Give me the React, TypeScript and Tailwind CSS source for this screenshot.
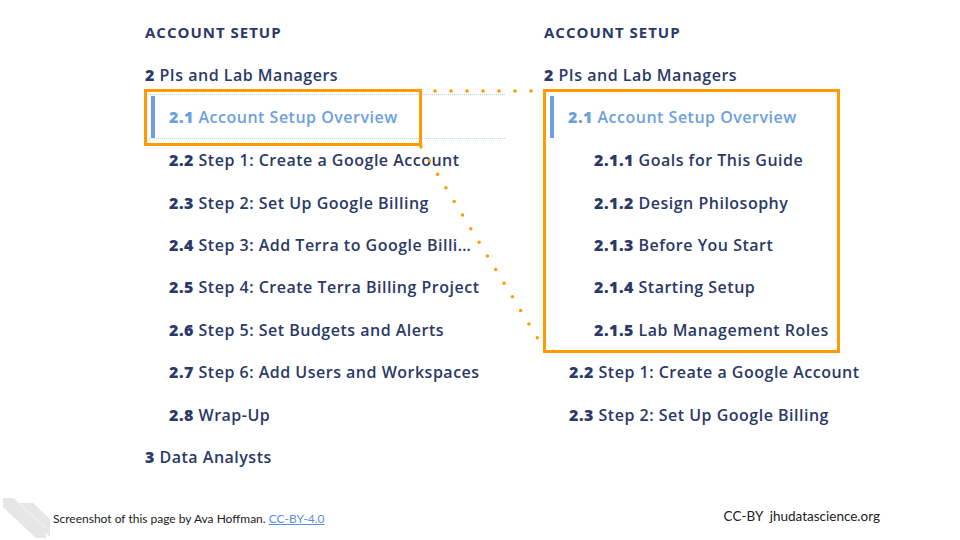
import React from 'react';

const NAVY = 'text-[#2b3967]';

const leftItems = [
  { num: '2.2', label: 'Step 1: Create a Google Account' },
  { num: '2.3', label: 'Step 2: Set Up Google Billing' },
  { num: '2.4', label: 'Step 3: Add Terra to Google Billing Account' },
  { num: '2.5', label: 'Step 4: Create Terra Billing Project' },
  { num: '2.6', label: 'Step 5: Set Budgets and Alerts' },
  { num: '2.7', label: 'Step 6: Add Users and Workspaces' },
  { num: '2.8', label: 'Wrap-Up' },
];

const subItems = [
  { num: '2.1.1', label: 'Goals for This Guide' },
  { num: '2.1.2', label: 'Design Philosophy' },
  { num: '2.1.3', label: 'Before You Start' },
  { num: '2.1.4', label: 'Starting Setup' },
  { num: '2.1.5', label: 'Lab Management Roles' },
];

function TocRow({ num, label, indent, truncate }: { num: string; label: string; indent: string; truncate?: boolean }) {
  return (
    <div className={`h-[42.4px] flex items-center ${indent}`}>
      <span className={`${truncate ? 'w-[312px] truncate' : 'whitespace-nowrap'} block`}>
        <span className="font-extrabold">{num}</span> {label}
      </span>
    </div>
  );
}

function Header() {
  return (
    <>
      <div className="h-[24px] flex items-center text-[15px] font-bold tracking-[1px]">ACCOUNT SETUP</div>
      <div className="mt-[18px] h-[26px] flex items-center">
        <span>
          <span className="font-extrabold">2</span> PIs and Lab Managers
        </span>
      </div>
    </>
  );
}

function ActiveItem({ dotted }: { dotted?: boolean }) {
  return (
    <div
      className={`mt-[6px] h-[45px] ml-[4px] flex items-center ${
        dotted ? 'border-y border-dotted border-[#bcd3ef] w-[356px]' : ''
      }`}
    >
      <div className="w-[4px] h-[42px] bg-[#6d9fe0] ml-[2px]" />
      <span className="ml-[14px] text-[#6d9fe0]">
        <span className="font-extrabold">2.1</span> Account Setup Overview
      </span>
    </div>
  );
}

function Logo() {
  return (
    <svg width="52" height="44" viewBox="0 0 52 44" className="block">
      <polygon points="3,3 14,3 46,33 46,43 36,43 3,12" fill="#e6e6e6" />
      <polygon points="16,8 33,8 50,24 50,42 45,37 45,32" fill="#e6e6e6" />
      <line x1="13" y1="3" x2="46" y2="33" stroke="#f6f6f6" strokeWidth="1" />
    </svg>
  );
}

export default function App() {
  return (
    <div
      className={`relative w-[960px] h-[540px] bg-white overflow-hidden ${NAVY} text-[16px] font-semibold tracking-[0.5px]`}
      style={{ fontFamily: '"Open Sans", "Noto Sans", sans-serif' }}
    >
      <div className="flex pt-[20px] pl-[145px]">
        {/* left column */}
        <div className="w-[399px] flex flex-col">
          <Header />
          <ActiveItem dotted />
          {leftItems.map((it) => (
            <TocRow key={it.num} {...it} indent="pl-[24px]" truncate />
          ))}
          <TocRow num="3" label="Data Analysts" indent="" />
        </div>

        {/* right column */}
        <div className="flex flex-col">
          <Header />
          <ActiveItem />
          {subItems.map((it) => (
            <TocRow key={it.num} {...it} indent="pl-[50px]" />
          ))}
          <TocRow num="2.2" label="Step 1: Create a Google Account" indent="pl-[25px]" />
          <TocRow num="2.3" label="Step 2: Set Up Google Billing" indent="pl-[25px]" />
        </div>
      </div>

      {/* annotation overlays */}
      <div className="absolute left-[144px] top-[89px] w-[278px] h-[57px] border-[3px] border-[#ff9a00]" />
      <div className="absolute left-[543px] top-[89px] w-[297px] h-[264px] border-[3px] border-[#ff9a00]" />
      <svg className="absolute left-0 top-0 pointer-events-none" width="960" height="540">
        <line x1="435" y1="91" x2="532" y2="91" stroke="#ff9a00" strokeWidth="3.5" strokeLinecap="round" strokeDasharray="0 16" />
        <line x1="421" y1="147" x2="546" y2="352" stroke="#ff9a00" strokeWidth="3.5" strokeLinecap="round" strokeDasharray="0 15.95" />
      </svg>

      {/* footer */}
      <div className="absolute left-0 right-0 bottom-0 h-[46px] flex items-center justify-between pr-[80px] tracking-normal" style={{ fontFamily: 'Lato, sans-serif' }}>
        <div className="flex items-center">
          <Logo />
          <span className="text-[12px] text-[#222] font-normal ml-[1px] mt-[3px]">
            Screenshot of this page by Ava Hoffman.{' '}
            <span className="text-[#5b8fd9] underline">CC-BY-4.0</span>
          </span>
        </div>
        <span className="text-[13.5px] text-[#222] font-normal -mt-[2px]">CC-BY&nbsp; jhudatascience.org</span>
      </div>
    </div>
  );
}
